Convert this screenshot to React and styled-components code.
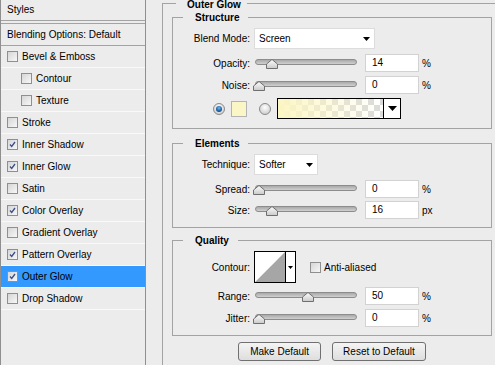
import React from "react";
import styled, { createGlobalStyle } from "styled-components";

const Global = createGlobalStyle`
  html, body { margin: 0; padding: 0; background: #ececec; }
  body {
    font-family: "Liberation Sans", Arial, sans-serif;
    font-size: 10px;
    color: #000;
  }
`;

const Window = styled.div`
  display: flex;
  width: 495px;
  height: 365px;
  overflow: hidden;
  background: #ececec;
`;

/* ---------- left list ---------- */
const Sidebar = styled.div`
  width: 144px;
  flex-shrink: 0;
  border-left: 1px solid #8f8f8f;
  border-right: 1px solid #8f8f8f;
  margin-right: 16px;
`;

const Header = styled.div`
  height: 20px;
  line-height: 20px;
  padding-left: 6px;
  border-bottom: 1px solid #a3a3a3;
`;

const List = styled.div`
  margin-top: 2px;
  border-top: 1px solid #a3a3a3;
`;

const Item = styled.div`
  display: flex;
  align-items: center;
  height: 21px;
  padding-left: ${p => (p.$nested ? 20 : 6)}px;
  border-bottom: 1px solid ${p => (p.$strong ? "#a3a3a3" : "#f9f9f9")};
  background: ${p => (p.$active ? "#3399ff" : "transparent")};
  gap: 4px;
`;

const Box = styled.span`
  display: inline-flex;
  align-items: center;
  justify-content: center;
  width: 11px;
  height: 11px;
  box-sizing: border-box;
  border: 1px solid #8e8f8f;
  background: linear-gradient(135deg, #d6d6d6, #f7f7f7);
  flex-shrink: 0;
`;

const Check = ({ on }) => (
  <Box>
    {on && (
      <svg width="9" height="9" viewBox="0 0 9 9">
        <path d="M2 4.5 L3.7 6.4 L7 2" fill="none" stroke="#3b4f86" strokeWidth="1.3" />
      </svg>
    )}
  </Box>
);

/* ---------- right pane ---------- */
const Main = styled.div`
  position: relative;
  margin-top: 3px;
  width: 360px;
  flex-shrink: 0;
  border-left: 1px solid #a3a3a3;
  border-top: 1px solid #a3a3a3;
  padding: 13px 0 0 9px;
`;

const Group = styled.div`
  position: relative;
  width: 318px;
  border: 1px solid #a3a3a3;
  padding: ${p => p.$pad};
  margin-top: ${p => p.$mt || 0}px;
`;

const Legend = styled.span`
  position: absolute;
  top: ${p => p.$top ?? -7}px;
  left: ${p => p.$left || 10}px;
  line-height: 13px;
  padding: 0 ${p => p.$pr || 9}px 0 ${p => p.$pl || 12}px;
  background: #ececec;
  font-weight: bold;
`;

const Row = styled.div`
  display: flex;
  align-items: center;
  height: ${p => p.$h}px;
  margin-top: ${p => p.$mt || 0}px;
  padding-left: ${p => p.$pl || 0}px;
`;

const Label = styled.span`
  width: 77px;
  margin-right: 4px;
  text-align: right;
  flex-shrink: 0;
`;

const Select = styled.div`
  display: flex;
  align-items: center;
  justify-content: space-between;
  box-sizing: border-box;
  width: ${p => p.$w}px;
  height: 21px;
  padding: 0 4px 0 4px;
  background: #fff;
  border: 1px solid #dcdcdc;
`;

const Arrow = ({ w = 7, h = 4 }) => (
  <svg width={w} height={h} viewBox={`0 0 ${w} ${h}`}>
    <polygon points={`0,0 ${w},0 ${w / 2},${h}`} fill="#000" />
  </svg>
);

const SliderWrap = styled.div`
  position: relative;
  width: 104px;
  height: 18px;
  flex-shrink: 0;
`;

const Track = styled.div`
  position: absolute;
  left: 1px;
  right: 1px;
  top: 5px;
  height: 4px;
  border: 1px solid #8c8c8c;
  border-radius: 3px;
  background: linear-gradient(#a9a9a9, #d0d0d0);
`;

const Thumb = styled.svg`
  position: absolute;
  top: 5px;
`;

const Slider = ({ at }) => (
  <SliderWrap>
    <Track />
    <Thumb width="12" height="10" viewBox="0 0 12 10" style={{ left: at - 1 }}>
      <defs>
        <linearGradient id="tg" x1="0" y1="0" x2="0" y2="1">
          <stop offset="0" stopColor="#ffffff" />
          <stop offset="1" stopColor="#c9c9c9" />
        </linearGradient>
      </defs>
      <polygon points="0.5,9.5 0.5,5 6,0.5 11.5,5 11.5,9.5" fill="url(#tg)" stroke="#6f6f6f" />
    </Thumb>
  </SliderWrap>
);

const Field = styled.div`
  box-sizing: border-box;
  width: 54px;
  height: 18px;
  line-height: 16px;
  margin-left: 7px;
  padding-left: 6px;
  background: #fff;
  border: 1px solid #d2d2d2;
`;

const Unit = styled.span`
  margin-left: 3px;
`;

const Radio = styled.span`
  box-sizing: border-box;
  width: 12px;
  height: 12px;
  border-radius: 50%;
  border: 1px solid #8a8a8a;
  background: radial-gradient(circle at 50% 35%, #ffffff, #c2c2c2);
  display: inline-flex;
  align-items: center;
  justify-content: center;
  margin-right: ${p => p.$mr}px;
  &::after {
    content: "";
    display: ${p => (p.$on ? "block" : "none")};
    width: 6px;
    height: 6px;
    border-radius: 50%;
    background: radial-gradient(circle at 50% 35%, #6fb6ee, #0f4f8f 70%);
  }
`;

const Swatch = styled.span`
  box-sizing: border-box;
  width: 16px;
  height: 16px;
  border: 1px solid #b4b4b4;
  background: #fbf6c5;
  margin-right: 12px;
`;

const GradientBox = styled.div`
  display: flex;
  box-sizing: border-box;
  width: 124px;
  height: 21px;
  border: 1px solid #000;
`;

const GradientFill = styled.div`
  flex: 1;
  border-right: 1px solid #000;
  background:
    linear-gradient(to right, #fcf6c4, rgba(252, 246, 196, 0)),
    conic-gradient(#dadada 25%, #fff 0 50%, #dadada 0 75%, #fff 0) 0 0 / 12px 12px;
`;

const DropPart = styled.div`
  width: ${p => p.$w || 16}px;
  display: flex;
  align-items: center;
  justify-content: center;
  background: #fff;
`;

const ContourBox = styled.div`
  display: flex;
  box-sizing: border-box;
  width: 42px;
  height: 32px;
  border: 1px solid #000;
  background: #fff;
`;

const ContourPreview = styled.svg`
  border-right: 1px solid #000;
`;

const CheckLabel = styled.label`
  display: flex;
  align-items: center;
  gap: 3px;
  margin-left: 14px;
`;

const Buttons = styled.div`
  display: flex;
  justify-content: center;
  gap: 11px;
  width: 320px;
  margin-top: 6px;
`;

const Button = styled.button`
  height: 19px;
  padding: 0 ${p => p.$px}px;
  font: inherit;
  color: #000;
  border: 1px solid #707070;
  border-radius: 3px;
  background: linear-gradient(#f4f4f4, #dedede);
`;

const items = [
  ["Bevel & Emboss", false],
  ["Contour", false, true],
  ["Texture", false, true],
  ["Stroke", false],
  ["Inner Shadow", true],
  ["Inner Glow", true],
  ["Satin", false],
  ["Color Overlay", true],
  ["Gradient Overlay", false],
  ["Pattern Overlay", true],
  ["Outer Glow", true, false, true],
  ["Drop Shadow", false],
];

const SliderRow = ({ label, at, value, unit = "%", mt }) => (
  <Row $h={18} $mt={mt}>
    <Label>{label}</Label>
    <Slider at={at} />
    <Field>{value}</Field>
    <Unit>{unit}</Unit>
  </Row>
);

export default function App() {
  return (
    <Window>
      <Global />
      <Sidebar>
        <Header>Styles</Header>
        <List>
          <Item $strong>Blending Options: Default</Item>
          {items.map(([name, on, nested, active]) => (
            <Item key={name} $nested={nested} $active={active}>
              <Check on={on} />
              {name}
            </Item>
          ))}
        </List>
      </Sidebar>

      <Main>
        <Legend $top={-6} $left={13} $pl={11} $pr={6}>Outer Glow</Legend>

        <Group $pad="10px 0 9px 0">
          <Legend>Structure</Legend>
          <Row $h={21}>
            <Label>Blend Mode:</Label>
            <Select $w={121}>
              Screen
              <Arrow />
            </Select>
          </Row>
          <SliderRow label="Opacity:" at={13} value="14" mt={5} />
          <SliderRow label="Noise:" at={0} value="0" mt={4} />
          <Row $h={21} $mt={4} $pl={40}>
            <Radio $on $mr={6} />
            <Swatch />
            <Radio $mr={6} />
            <GradientBox>
              <GradientFill />
              <DropPart>
                <Arrow w={9} h={5} />
              </DropPart>
            </GradientBox>
          </Row>
        </Group>

        <Group $pad="10px 0 8px 0" $mt={14}>
          <Legend>Elements</Legend>
          <Row $h={21}>
            <Label>Technique:</Label>
            <Select $w={64}>
              Softer
              <Arrow />
            </Select>
          </Row>
          <SliderRow label="Spread:" at={0} value="0" mt={5} />
          <SliderRow label="Size:" at={13} value="16" unit="px" mt={3} />
        </Group>

        <Group $pad="10px 0 8px 0" $mt={12}>
          <Legend>Quality</Legend>
          <Row $h={32}>
            <Label>Contour:</Label>
            <ContourBox>
              <ContourPreview width="31" height="30" viewBox="0 0 30 30">
                <polygon points="0,30 30,0 30,30" fill="#a6a6a6" />
              </ContourPreview>
              <DropPart $w={9}>
                <Arrow w={5} h={3} />
              </DropPart>
            </ContourBox>
            <CheckLabel>
              <Check on={false} />
              Anti-aliased
            </CheckLabel>
          </Row>
          <SliderRow label="Range:" at={49} value="50" mt={4} />
          <SliderRow label="Jitter:" at={0} value="0" mt={4} />
        </Group>

        <Buttons>
          <Button $px={11}>Make Default</Button>
          <Button $px={10}>Reset to Default</Button>
        </Buttons>
      </Main>
    </Window>
  );
}
